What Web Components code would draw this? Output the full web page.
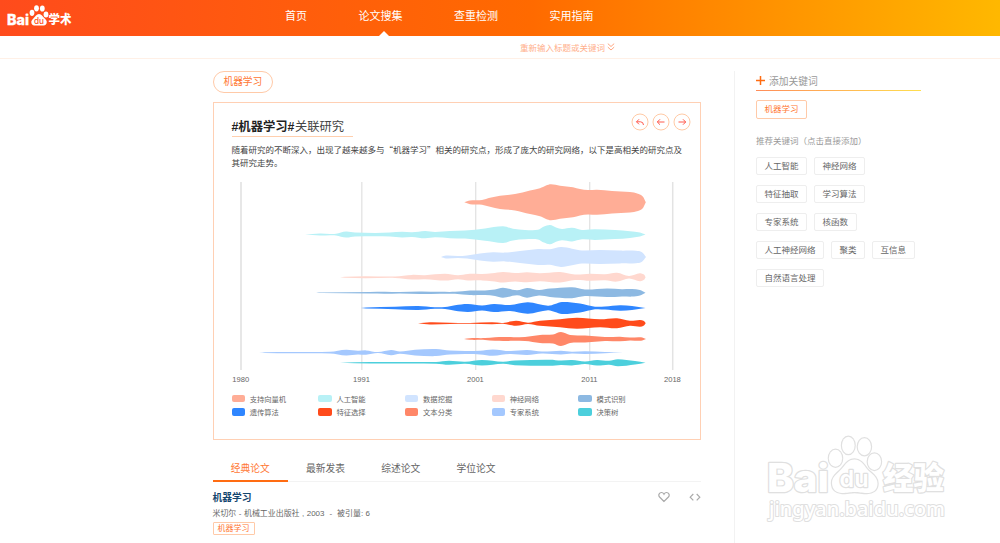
<!DOCTYPE html>
<html lang="zh-CN">
<head>
<meta charset="utf-8">
<title>百度学术</title>
<style>
    body {
        margin: 0;
        height: 543px;
        overflow: hidden;
        position: relative;
        background: #fff;
        color: #666;
        font-family: "Liberation Sans", "Noto Sans CJK SC", sans-serif;
        font-size: 8.5px;
    }
    main {
        display: flex;
        padding: 12.5px 0 0 212.5px;
    }
    .content {
        width: 488px;
        margin-right: 33px;
    }
    topic-card { margin-top: 9.2px; }
    paper-tabs { margin-top: 14px; }
</style>
</head>
<body>
    <site-header>
        <nav-link>首页</nav-link>
        <nav-link active>论文搜集</nav-link>
        <nav-link>查重检测</nav-link>
        <nav-link>实用指南</nav-link>
    </site-header>
    <search-toggle>重新输入标题或关键词</search-toggle>
    <main>
        <div class="content">
            <key-tag kind="pill">机器学习</key-tag>
            <topic-card>
                <b slot="topic">#机器学习#</b>
                <span slot="title">关联研究</span>
                <span slot="intro">随着研究的不断深入，出现了越来越多与“机器学习”相关的研究点，形成了庞大的研究网络，以下是高相关的研究点及其研究走势。</span>
                <stream-chart></stream-chart>
                <chart-legend></chart-legend>
            </topic-card>
            <paper-tabs>
                <span class="on">经典论文</span>
                <span>最新发表</span>
                <span>综述论文</span>
                <span>学位论文</span>
            </paper-tabs>
            <paper-item>
                <span slot="name">机器学习</span>
                <span slot="meta">米切尔 - 机械工业出版社 , 2003 &nbsp;-&nbsp; 被引量: 6</span>
                <key-tag kind="small">机器学习</key-tag>
            </paper-item>
        </div>
        <keyword-panel>
            <key-tag slot="current" kind="active">机器学习</key-tag>
            <key-tag>人工智能</key-tag>
            <key-tag>神经网络</key-tag>
            <key-tag>特征抽取</key-tag>
            <key-tag>学习算法</key-tag>
            <key-tag>专家系统</key-tag>
            <key-tag>核函数</key-tag>
            <key-tag>人工神经网络</key-tag>
            <key-tag>聚类</key-tag>
            <key-tag>互信息</key-tag>
            <key-tag>自然语言处理</key-tag>
        </keyword-panel>
    </main>
    <site-watermark></site-watermark>

<script>
    // Registers an element whose shadow root is filled from a markup string
    function define(name, markup) {
        customElements.define(name, class extends HTMLElement {
            constructor() {
                super();
                const shadow = this.attachShadow({ mode: "open" });
                shadow.innerHTML = typeof markup === "function" ? markup() : markup;
            }
        });
    }

    // name, colour, centre line, then [x, half thickness] pairs
    const streams = [
        ["支持向量机", "#ffad96", 202.3, [[464.3,0],[470,1.9],[482,2.4],[490,4.5],[500,6.6],[515,8.2],[530,11.8],[540,14],[546,16.7],[551,18],[560,16.5],[573,15],[580,13.2],[588,12.2],[597,12.5],[612,11.2],[630,10.2],[638,8.6],[643,5.6],[645.8,0]]],
        ["人工智能", "#b8f1f6", 234.6, [[305,0],[320,1],[330,.6],[336,.8],[346,3],[355,2],[375,1.7],[390,2],[402,2.8],[412,2.3],[425,3.7],[435,2.7],[450,3.6],[465,4],[485,6.1],[503,8.3],[513,5.8],[525,4.7],[538,4.8],[544,8],[550,9.7],[556,7.2],[562,5.7],[572,6.8],[582,4.7],[595,5.3],[615,4.5],[630,3.4],[640,2],[645.5,0]]],
        ["数据挖掘", "#d1e4ff", 257, [[441,0],[446,1.4],[458,1],[467,1.6],[480,3.5],[493,4.7],[505,4.4],[520,6],[538,8],[550,7.8],[561,9.9],[572,8.3],[582,6.6],[600,7],[620,6.4],[636,6.2],[642,4.7],[646,0]]],
        ["神经网络", "#ffd8cf", 277.2, [[340,0],[345,.5],[365,1],[395,.7],[412,2.3],[425,2],[445,3.4],[458,2],[468,3.3],[482,3.2],[492,4],[503,5.3],[515,4.2],[527,5],[540,4],[560,5.3],[575,2.8],[590,3.5],[605,3],[617,4.4],[629,1.3],[640,4],[644,2.6],[645.6,0]]],
        ["模式识别", "#8db9e2", 292.8, [[316,0],[322,.3],[370,.8],[385,1],[400,.7],[420,1.3],[440,1],[455,1],[470,2.3],[485,2.3],[495,3.2],[503,5],[517,2.5],[527,4.9],[539,2.8],[550,4.2],[572,5.5],[585,3.3],[607,4.3],[622,3.6],[632,3.8],[640,2.8],[645.5,0]]],
        ["遗传算法", "#2f86ff", 308, [[361,0],[366,.5],[395,1.2],[418,2],[435,.8],[445,1],[455,2.8],[468,4],[482,2.4],[494,4],[510,3],[528,5.7],[548,2.2],[555,4],[562,6],[580,4.5],[595,1.3],[605,1.5],[620,2.8],[632,2],[645.5,0]]],
        ["特征选择", "#ff4b1b", 323.3, [[418,0],[430,1.1],[450,.6],[470,.4],[492,1],[503,.4],[516,2.5],[528,.6],[540,2.5],[560,4],[577,5.5],[600,4],[617,5],[630,2.5],[640,3.4],[644,2.2],[645.7,0]]],
        ["文本分类", "#ff8768", 339, [[464,0],[470,.8],[485,.9],[495,1.8],[525,2.1],[540,4],[553,4.5],[561,7],[570,4],[585,3.5],[605,2],[620,2.3],[630,1.5],[641,1.7],[646,0]]],
        ["专家系统", "#a4c8fe", 352.6, [[259,0],[265,.4],[290,.6],[330,.8],[346,2.8],[358,1.8],[366,2.2],[378,.5],[391,2.7],[400,1.2],[415,2.8],[436,3.5],[450,2],[465,1.5],[480,1.8],[493,3.2],[510,1.5],[527,2.5],[542,1],[561,1.8],[572,.9],[585,1.4],[605,.6],[623,0]]],
        ["决策树", "#4ccfdc", 362.8, [[340,0],[370,.7],[436,.9],[449,2],[465,1],[482,2.8],[503,1],[515,2.4],[550,3],[561,2.2],[572,2.7],[585,1.3],[597,2.8],[609,2],[618,3.5],[635,1.7],[645.5,0]]]
    ];
    const years = [[241, 1980, 1.7], [361.8, 1991, 1.3], [475.7, 2001, 1.3], [589.7, 2011, 1.3], [672.7, 2018, 1.5]];

    // Smooth curve through the points of one side of a stream
    function side(points) {
        let d = "";
        for (let i = 0; i < points.length - 1; i++) {
            const p0 = points[i - 1] || points[i];
            const p1 = points[i];
            const p2 = points[i + 1];
            const p3 = points[i + 2] || p2;
            const k = (p2[0] - p1[0]) / 3;
            const m1 = (p2[1] - p0[1]) / (p2[0] - p0[0]);
            const m2 = (p3[1] - p1[1]) / (p3[0] - p1[0]);
            d += `C${p1[0] + k} ${p1[1] + m1 * k} ${p2[0] - k} ${p2[1] - m2 * k} ${p2[0]} ${p2[1]}`;
        }
        return d;
    }

    function streamPath(y, points) {
        const top = points.map(([x, h]) => [x, y - h]);
        const bottom = points.map(([x, h]) => [x, y + h]).reverse();
        return `M${top[0]}${side(top)}${side(bottom)}Z`;
    }

    define("site-header", `
        <style>
            :host {
                display: flex;
                height: 35.6px;
                background: linear-gradient(90deg, #ff4b1c, #ff6a00 53%, #ffb800);
            }
            svg { width: 80px; height: 35px; margin-right: 205px; flex: none; }
            nav { display: flex; gap: 51.5px; }
            text { font-family: Inter, "Noto Sans CJK SC", sans-serif; font-weight: 800; }
        </style>
        <svg viewBox="0 0 80 35" fill="#fff">
            <text x="7" y="25.3" font-size="14.5" textLength="22" lengthAdjust="spacingAndGlyphs" stroke="#fff" stroke-width=".3">Bai</text>
            <ellipse cx="32" cy="12.8" rx="2.4" ry="3.1"/>
            <ellipse cx="36.5" cy="8.3" rx="2.4" ry="3.1"/>
            <ellipse cx="42.3" cy="8.5" rx="2.4" ry="3.1"/>
            <ellipse cx="46" cy="14.4" rx="2.4" ry="3"/>
            <path d="M39 14c2.6 0 3.7 2.4 5.2 4 1.6 1.5 3.3 3 2.3 5.5-1 2.8-4.4 2-7.5 2s-6.5.8-7.5-2c-.9-2.5.8-4 2.3-5.5 1.5-1.5 2.6-4 5.2-4z"/>
            <text x="34" y="23.8" font-size="8.5" fill="#ff4f19" textLength="10" lengthAdjust="spacingAndGlyphs" style="font-weight:500">du</text>
            <text x="48.5" y="24.3" font-size="12" textLength="23" lengthAdjust="spacingAndGlyphs">学术</text>
        </svg>
        <nav><slot></slot></nav>
    `);

    define("nav-link", `
        <style>
            :host {
                display: block;
                position: relative;
                color: #fff;
                font-size: 11px;
                line-height: 32px;
            }
            :host([active])::after {
                content: "";
                position: absolute;
                left: 20.5px;
                bottom: 0;
                border: solid transparent;
                border-width: 0 5.5px 5.5px;
                border-bottom-color: #fff;
            }
        </style>
        <slot></slot>
    `);

    define("search-toggle", `
        <style>
            :host {
                display: flex;
                align-items: center;
                gap: 2px;
                height: 22px;
                padding-left: 520px;
                border-bottom: 1px solid #fff0e6;
                color: #ffb08c;
                font-size: 8.5px;
            }
            svg { width: 8px; height: 8px; }
        </style>
        <slot></slot>
        <svg viewBox="0 0 8 8" fill="none" stroke="#ffa680"><path d="M.8.6 4 3.5 7.2.6M.8 4.1 4 7 7.2 4.1"/></svg>
    `);

    define("key-tag", `
        <style>
            :host {
                display: block;
                box-sizing: border-box;
                width: fit-content;
                height: 18.5px;
                padding: 0 7.5px;
                border: 1px solid #eee;
                border-radius: 2px;
                font-size: 8.5px;
                line-height: 17px;
                white-space: nowrap;
            }
            :host([kind]) { color: #ff7733; border-color: #ffcaa8; }
            :host([kind=pill]) {
                height: 21.5px;
                padding: 0 10px;
                border-radius: 11px;
                font-size: 9.7px;
                line-height: 20px;
            }
            :host([kind=small]) {
                height: 13px;
                padding: 0 4px;
                border-radius: 1px;
                font-size: 8px;
                line-height: 11px;
            }
        </style>
        <slot></slot>
    `);

    define("topic-card", `
        <style>
            :host {
                display: block;
                box-sizing: border-box;
                height: 338px;
                padding: 9px 18px 0;
                border: 1px solid #ffd0b4;
            }
            header { display: flex; justify-content: space-between; }
            h2 {
                margin: 6px 0 0;
                width: 121.5px;
                height: 18px;
                border-bottom: 1px solid #ffcfae;
                color: #444;
                font-size: 12.3px;
                font-weight: normal;
                line-height: 18px;
                white-space: nowrap;
            }
            ::slotted(b) { color: #222; margin-right: .5px; }
            .tools { display: flex; gap: 3.2px; margin: 1px -9.5px 0 0; }
            .tools svg { width: 18px; height: 18px; }
            circle { stroke: #ffcaa5; }
            p {
                margin: 6.5px -6px 8px 0;
                color: #444;
                font-family: "Noto Sans CJK SC", sans-serif;
                font-size: 8.5px;
                line-height: 13px;
            }
        </style>
        <header>
            <h2><slot name="topic"></slot><slot name="title"></slot></h2>
            <div class="tools">
                <svg viewBox="0 0 18 18" fill="none" stroke="#ff5a4d"><circle cx="9" cy="9" r="8"/><path d="M8 6.3 5.5 8.8 8 11.3M5.5 8.8H9.5Q12.3 8.8 12.5 12"/></svg>
                <svg viewBox="0 0 18 18" fill="none" stroke="#ff5a4d"><circle cx="9" cy="9" r="8"/><path d="M8 6.3 5.3 9 8 11.7M5.3 9H12.5"/></svg>
                <svg viewBox="0 0 18 18" fill="none" stroke="#ff5a4d"><circle cx="9" cy="9" r="8"/><path d="M10 6.3 12.7 9 10 11.7M12.7 9H5.5"/></svg>
            </div>
        </header>
        <p><slot name="intro"></slot></p>
        <slot></slot>
    `);

    define("stream-chart", () => `
        <style>
            :host { display: block; height: 212px; }
            svg { display: block; width: 450px; height: 212px; overflow: visible; }
            text { font-family: "Liberation Sans", sans-serif; font-size: 7.6px; fill: #666; text-anchor: middle; }
        </style>
        <svg viewBox="232 177 450 212">
            ${years.map(([x, year, w]) => `
                <path d="M${x} 182V370" stroke="#e3e3e3" stroke-width="${w}"/>
                <text x="${x - .3}" y="381.7">${year}</text>`).join("")}
            ${streams.map(([, color, y, points]) => `<path fill="${color}" d="${streamPath(y, points)}"/>`).join("")}
        </svg>
    `);

    define("chart-legend", () => `
        <style>
            :host {
                display: grid;
                grid-template-columns: repeat(5, 86.7px);
                grid-auto-rows: 13.3px;
                margin-top: 2.8px;
                font-size: 7.3px;
            }
            span { display: flex; align-items: center; gap: 4.7px; white-space: nowrap; }
            i { width: 13.5px; height: 7.5px; border-radius: 2px; }
        </style>
        ${streams.map(([name, color]) => `<span><i style="background:${color}"></i>${name}</span>`).join("")}
    `);

    define("paper-tabs", `
        <style>
            :host { display: flex; height: 27.5px; border-bottom: 1px solid #f3f3f3; }
            ::slotted(span) {
                box-sizing: border-box;
                width: 75.3px;
                height: 28.5px;
                text-align: center;
                font-size: 9.75px;
                line-height: 29px;
            }
            ::slotted(.on) { color: #ff7733; border-bottom: 2px solid #ff6c12; }
        </style>
        <slot></slot>
    `);

    define("paper-item", `
        <style>
            :host { display: block; padding-top: 6.5px; }
            .row { display: flex; align-items: center; height: 17px; }
            h3 { flex: 1; margin: 0; color: #14466e; font-size: 9.75px; }
            svg { width: 12px; height: 12px; margin-left: 18.5px; }
            .meta { height: 16px; font-size: 7.95px; line-height: 15px; word-spacing: .3px; }
        </style>
        <div class="row">
            <h3><slot name="name"></slot></h3>
            <svg viewBox="0 0 12 12" fill="none" stroke="#aaa" stroke-width="1.2"><path d="M6 10.5 1.6 6C.2 4.5.8 1.7 3.2 1.5 4.6 1.4 5.5 2.3 6 3.2 6.5 2.3 7.4 1.4 8.8 1.5 11.2 1.7 11.8 4.5 10.4 6Z"/></svg>
            <svg viewBox="0 0 12 12" fill="none" stroke="#aaa" stroke-width="1.2"><path d="M4.3 3 1.2 6.2 4.3 9.4M7.7 3 10.8 6.2 7.7 9.4"/></svg>
        </div>
        <div class="meta"><slot name="meta"></slot></div>
        <slot></slot>
    `);

    define("keyword-panel", `
        <style>
            :host {
                display: block;
                width: 165px;
                height: 474px;
                padding-left: 21.5px;
                border-left: 1px solid #f2f2f2;
            }
            h4 {
                display: flex;
                align-items: center;
                gap: 4px;
                box-sizing: border-box;
                height: 20px;
                margin: 0 0 9px;
                border-bottom: 1px solid;
                border-image: linear-gradient(90deg, #ff8c5a, #ffdf4f) 1;
                color: #999;
                font-size: 9.75px;
                font-weight: normal;
            }
            svg { width: 9px; height: 9px; }
            p { margin: 15px 0 9px; height: 14px; line-height: 14px; color: #999; }
            .tags { display: flex; flex-wrap: wrap; gap: 9.5px 7px; }
        </style>
        <h4><svg viewBox="0 0 9 9" stroke="#ff6c12" stroke-width="1.5"><path d="M4.5 0V9M0 4.5H9"/></svg>添加关键词</h4>
        <slot name="current"></slot>
        <p>推荐关键词（点击直接添加）</p>
        <div class="tags"><slot></slot></div>
    `);

    // Floats over the bottom right corner of the page
    define("site-watermark", `
        <style>
            :host { position: absolute; left: 760px; top: 430px; }
            svg { display: block; width: 195px; height: 100px; }
            text { font-family: Inter, "Noto Sans CJK SC", sans-serif; font-weight: 800; }
            .url { font-family: "Noto Sans", sans-serif; font-weight: 500; }
        </style>
        <svg viewBox="760 430 195 100" fill="#fff" stroke="#e0e0e0" stroke-width="2.4" stroke-linejoin="round" paint-order="stroke">
            <text x="767" y="491.5" font-size="39" textLength="62" lengthAdjust="spacingAndGlyphs">Bai</text>
            <ellipse cx="835.5" cy="458.3" rx="6.6" ry="8.5"/>
            <ellipse cx="848.3" cy="445.4" rx="6.3" ry="8.7"/>
            <ellipse cx="864.4" cy="446.8" rx="6.6" ry="8.5"/>
            <ellipse cx="874.4" cy="461.7" rx="6.6" ry="8.3"/>
            <path d="M854.5 459.5c6.5 0 9.5 5.5 12.5 9.5 4 4.5 10.5 7.5 10.5 14.5s-5 9.5-10.5 9.5-8-1-12.5-1-7 1-12.5 1-10-3.5-10-10 5-9 9.500-14 6.500-9.500 13-9.500z"/>
            <text x="839.5" y="487" font-size="23" textLength="29" lengthAdjust="spacingAndGlyphs" style="font-weight:600">du</text>
            <text x="883" y="488.5" font-size="31" textLength="61" lengthAdjust="spacingAndGlyphs">经验</text>
            <text class="url" x="769" y="516" font-size="19.5" textLength="176" lengthAdjust="spacingAndGlyphs" stroke-width="2">jingyan.baidu.com</text>
        </svg>
    `);
</script>
</body>
</html>
